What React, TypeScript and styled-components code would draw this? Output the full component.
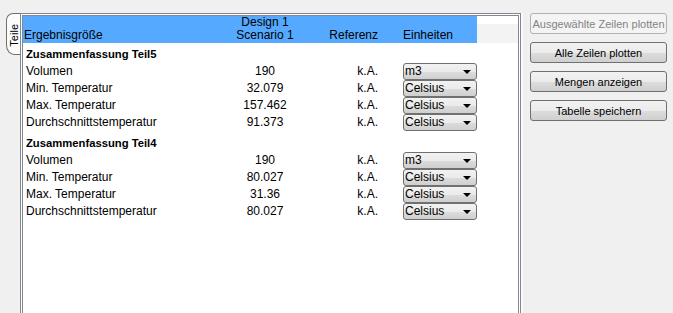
import React from 'react'
import styled, { createGlobalStyle } from 'styled-components'

type Row = {
  name: string,
  value: string,
  unit: string
}

type Group = {
  title: string,
  rows: Row[]
}

const groups: Group[] = [
  {
    title: 'Zusammenfassung Teil5',
    rows: [
      { name: 'Volumen', value: '190', unit: 'm3' },
      { name: 'Min. Temperatur', value: '32.079', unit: 'Celsius' },
      { name: 'Max. Temperatur', value: '157.462', unit: 'Celsius' },
      { name: 'Durchschnittstemperatur', value: '91.373', unit: 'Celsius' }
    ]
  },
  {
    title: 'Zusammenfassung Teil4',
    rows: [
      { name: 'Volumen', value: '190', unit: 'm3' },
      { name: 'Min. Temperatur', value: '80.027', unit: 'Celsius' },
      { name: 'Max. Temperatur', value: '31.36', unit: 'Celsius' },
      { name: 'Durchschnittstemperatur', value: '80.027', unit: 'Celsius' }
    ]
  }
]

const buttons = [
  { label: 'Ausgewählte Zeilen plotten', disabled: true },
  { label: 'Alle Zeilen plotten', disabled: false },
  { label: 'Mengen anzeigen', disabled: false },
  { label: 'Tabelle speichern', disabled: false }
]

export const App = () => {
  return (
    <Page>
      <GlobalStyle />
      <TabColumn>
        <Tab><TabLabel>Teile</TabLabel></Tab>
      </TabColumn>

      <Panel>
        <Inner>
          <HeaderBar>
            <Header>
              <HeadCell $pad={1}>Ergebnisgröße</HeadCell>
              <HeadCell $align="center">Design 1<br />Scenario 1</HeadCell>
              <HeadCell $align="right" $padRight={22}>Referenz</HeadCell>
              <HeadCell $pad={3}>Einheiten</HeadCell>
            </Header>
            <HeaderFiller />
          </HeaderBar>

          <Groups>
            {groups.map(g => (
              <GroupBlock key={g.title}>
                <GroupTitle>{g.title}</GroupTitle>
                {g.rows.map(r => (
                  <TableRow key={r.name}>
                    <Cell $pad={3}>{r.name}</Cell>
                    <Cell $align="center">{r.value}</Cell>
                    <Cell $align="right" $padRight={22}>k.A.</Cell>
                    <Cell $pad={3}>
                      <Combo>
                        <span>{r.unit}</span>
                        <Arrow />
                      </Combo>
                    </Cell>
                  </TableRow>
                ))}
              </GroupBlock>
            ))}
          </Groups>
        </Inner>
      </Panel>

      <Buttons>
        {buttons.map(b => (
          <Button key={b.label} $disabled={b.disabled}>{b.label}</Button>
        ))}
      </Buttons>
    </Page>
  )
}

export default App

const GlobalStyle = createGlobalStyle`
  html, body {
    margin: 0;
    padding: 0;
    background: #f0f0f0;
    overflow: hidden;
  }
  body {
    font-family: "Liberation Sans", Arial, sans-serif;
    font-size: 12px;
    color: #000;
  }
`

const Page = styled.div`
  display: flex;
  flex-direction: row;
  align-items: flex-start;
  height: 313px;
  padding-top: 13px;
  box-sizing: border-box;
  overflow: hidden;
`

const TabColumn = styled.div`
  width: 20px;
  display: flex;
  justify-content: flex-end;
`

const Tab = styled.div`
  width: 13px;
  height: 40px;
  border: 1px solid #6f6f6f;
  border-right: none;
  border-radius: 7px 0 0 8px / 7px 0 0 10px;
  background: #fcfcfc;
  display: flex;
  align-items: center;
  justify-content: center;
`

const TabLabel = styled.div`
  writing-mode: vertical-rl;
  transform: rotate(180deg);
  font-size: 11px;
  line-height: 12px;
  margin-top: 2px;
`

const Panel = styled.div`
  width: 501px;
  height: 320px;
  box-sizing: border-box;
  border: 1px solid #828790;
  padding: 1px;
  background: #fff;
  box-shadow: 2px 0 0 #fafafa;
`

const Inner = styled.div`
  height: 100%;
  box-sizing: border-box;
  border: 1px solid #828790;
  background: #fff;
`

const columns = '199px 86px 92px 77px'

const HeaderBar = styled.div`
  display: flex;
  height: 27px;
`

const Header = styled.div`
  display: grid;
  grid-template-columns: ${columns};
  align-items: end;
  background: #55aaff;
  padding-bottom: 1px;
  box-sizing: border-box;
`

const HeaderFiller = styled.div`
  flex: 1;
  margin-top: 8px;
  background: #f3f3f4;
`

const HeadCell = styled.div<{ $align?: string, $pad?: number, $padRight?: number }>`
  line-height: 13px;
  text-align: ${p => p.$align || 'left'};
  padding-left: ${p => p.$pad || 0}px;
  padding-right: ${p => p.$padRight || 0}px;
  white-space: nowrap;
`

const Groups = styled.div`
  padding-top: 3px;
`

const GroupBlock = styled.div`
  & + & {
    margin-top: 4px;
  }
`

const GroupTitle = styled.div`
  height: 17px;
  line-height: 17px;
  padding-left: 3px;
  font-weight: bold;
  font-size: 11.25px;
`

const TableRow = styled.div`
  display: grid;
  grid-template-columns: ${columns};
  height: 17px;
  align-items: center;
`

const Cell = styled.div<{ $align?: string, $pad?: number, $padRight?: number }>`
  line-height: 17px;
  text-align: ${p => p.$align || 'left'};
  padding-left: ${p => p.$pad || 0}px;
  padding-right: ${p => p.$padRight || 0}px;
  white-space: nowrap;
`

const Combo = styled.div`
  width: 74px;
  height: 17px;
  box-sizing: border-box;
  border: 1px solid #707070;
  border-radius: 3px;
  background: linear-gradient(#f2f2f2 0%, #ebebeb 50%, #dddddd 51%, #cfcfcf 100%);
  display: flex;
  align-items: center;
  justify-content: space-between;
  padding: 0 5px 0 1px;
  line-height: 15px;
`

const Arrow = styled.div`
  width: 0;
  height: 0;
  border-left: 4px solid transparent;
  border-right: 4px solid transparent;
  border-top: 4px solid #000;
`

const Buttons = styled.div`
  margin-left: 9px;
  width: 137px;
  display: flex;
  flex-direction: column;
  gap: 8px;
`

const Button = styled.div<{ $disabled?: boolean }>`
  height: 21px;
  box-sizing: border-box;
  border: 1px solid ${p => p.$disabled ? '#adb2b5' : '#707070'};
  border-radius: 3px;
  background: ${p => p.$disabled
    ? '#f4f4f4'
    : 'linear-gradient(#f2f2f2 0%, #ebebeb 50%, #dddddd 51%, #cfcfcf 100%)'};
  color: ${p => p.$disabled ? '#838383' : '#000'};
  font-size: 11px;
  display: flex;
  align-items: center;
  justify-content: center;
  white-space: nowrap;
  overflow: hidden;
`
